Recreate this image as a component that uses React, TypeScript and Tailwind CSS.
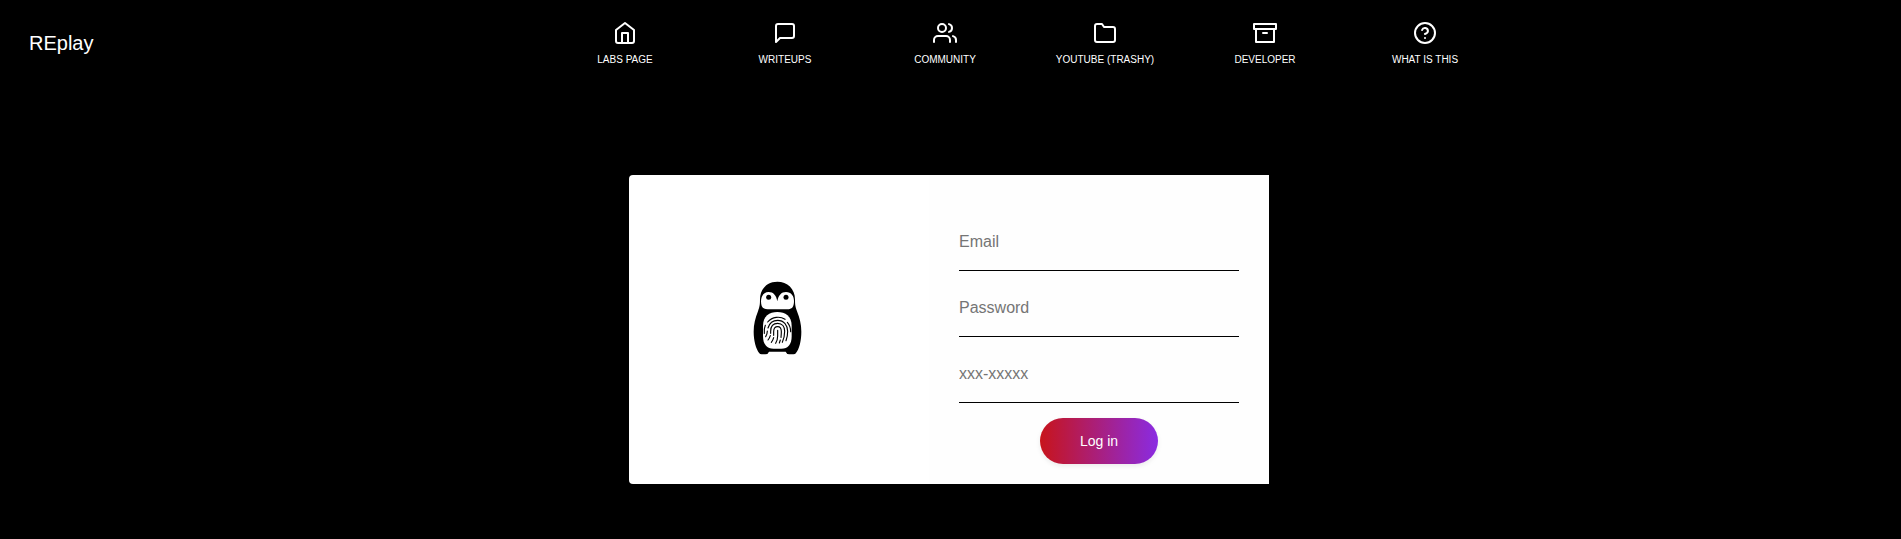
import React from "react";
import type { IconType } from "react-icons";
import { FiArchive, FiFolder, FiHelpCircle, FiHome, FiMessageSquare, FiUsers } from "react-icons/fi";

const links: { label: string; Icon: IconType }[] = [
  { label: "LABS PAGE", Icon: FiHome },
  { label: "WRITEUPS", Icon: FiMessageSquare },
  { label: "COMMUNITY", Icon: FiUsers },
  { label: "YOUTUBE (TRASHY)", Icon: FiFolder },
  { label: "DEVELOPER", Icon: FiArchive },
  { label: "WHAT IS THIS", Icon: FiHelpCircle },
];

const fields = [
  { type: "email", placeholder: "Email" },
  { type: "password", placeholder: "Password" },
  { type: "text", placeholder: "xxx-xxxxx" },
];

function Penguin() {
  return (
    <svg className="h-[95px] w-[75px]" viewBox="0 0 225 285" fill="none">
      <path
        fill="#000"
        d="M112 35C82 35 60 56 60 88C60 104 59 110 54 124C46 144 41 163 41 185C41 212 48 236 58 250Q60 253 65 253H76Q84 253 87 245H137Q140 253 148 253H160Q166 253 168 249C178 236 184 212 184 185C184 163 179 144 171 124C166 110 165 104 165 88C165 56 142 35 112 35Z"
      />
      <path
        fill="#fff"
        d="M86 66C100 66 109 76 112 94C115 76 124 66 138 66C154 66 162 79 162 93C162 111 156 118 142 118H83C69 118 63 111 63 94C63 79 71 66 86 66Z"
      />
      <circle cx="86" cy="82" r="7.5" fill="#000" />
      <circle cx="138" cy="82" r="7.5" fill="#000" />
      <path
        fill="#fff"
        d="M112 126C88 126 69 138 69 168V198C69 224 81 236 101 236H124C144 236 155 224 155 198V168C155 138 136 126 112 126Z"
      />
      <g stroke="#000" strokeWidth="3.4" strokeLinecap="round">
        <path d="M83 156C97 140 120 138 135 148" />
        <path d="M142 157C149 165 152 174 152 185" />
        <path d="M76 166C73 173 72 180 73 190" />
        <path d="M84 174C89 157 100 151 113 151C132 151 143 166 143 184Q143 200 138 212" />
        <path d="M82 183Q82 192 77 200" />
        <path d="M92 190V184C92 168 101 160 113 160C127 160 134 171 134 184Q134 202 127 217" />
        <path d="M91 197Q89 204 84 210" />
        <path d="M101 196V185C101 175 106 170 113 170C121 170 124 177 124 185Q124 192 123 202" />
        <path d="M101 203Q99 211 94 217" />
        <path d="M113 181V198Q113 209 107 220" />
        <path d="M121 210L118 219" />
      </g>
    </svg>
  );
}

export default function App() {
  return (
    <div className="h-[539px] overflow-hidden bg-black font-['Liberation_Sans',Arial,sans-serif]">
      <header className="flex h-[87px] text-white">
        <div className="w-[545px] pt-[28px] pl-[29px] text-xl leading-[30px]">REplay</div>
        <nav className="flex">
          {links.map(({ label, Icon }) => (
            <a key={label} href="#" className="flex w-40 flex-col items-center pt-[21px]">
              <Icon size={24} />
              <span className="mt-2 text-[10px] leading-[14px] whitespace-nowrap">{label}</span>
            </a>
          ))}
        </nav>
      </header>

      <main className="mt-[88px] ml-[629px] flex h-[309px] w-[640px] rounded-l bg-white">
        <div className="flex w-[300px] justify-center pt-[95px] pr-1">
          <Penguin />
        </div>
        <form className="flex w-[340px] flex-col items-center bg-[#fefefe] px-[30px] pt-[38px]">
          {fields.map((f) => (
            <input
              key={f.placeholder}
              type={f.type}
              placeholder={f.placeholder}
              className="mb-2 h-[58px] w-[280px] shrink-0 border-b border-black bg-transparent text-base text-black outline-none placeholder:text-[#757575]"
            />
          ))}
          <button
            type="button"
            className="mt-[7px] h-[46px] w-[118px] shrink-0 rounded-full bg-linear-to-r/srgb from-[#c7141b] to-[#8a2be2] text-sm text-white shadow-[0_2px_5px_rgba(0,0,0,0.08)]"
          >
            Log in
          </button>
        </form>
      </main>
    </div>
  );
}
